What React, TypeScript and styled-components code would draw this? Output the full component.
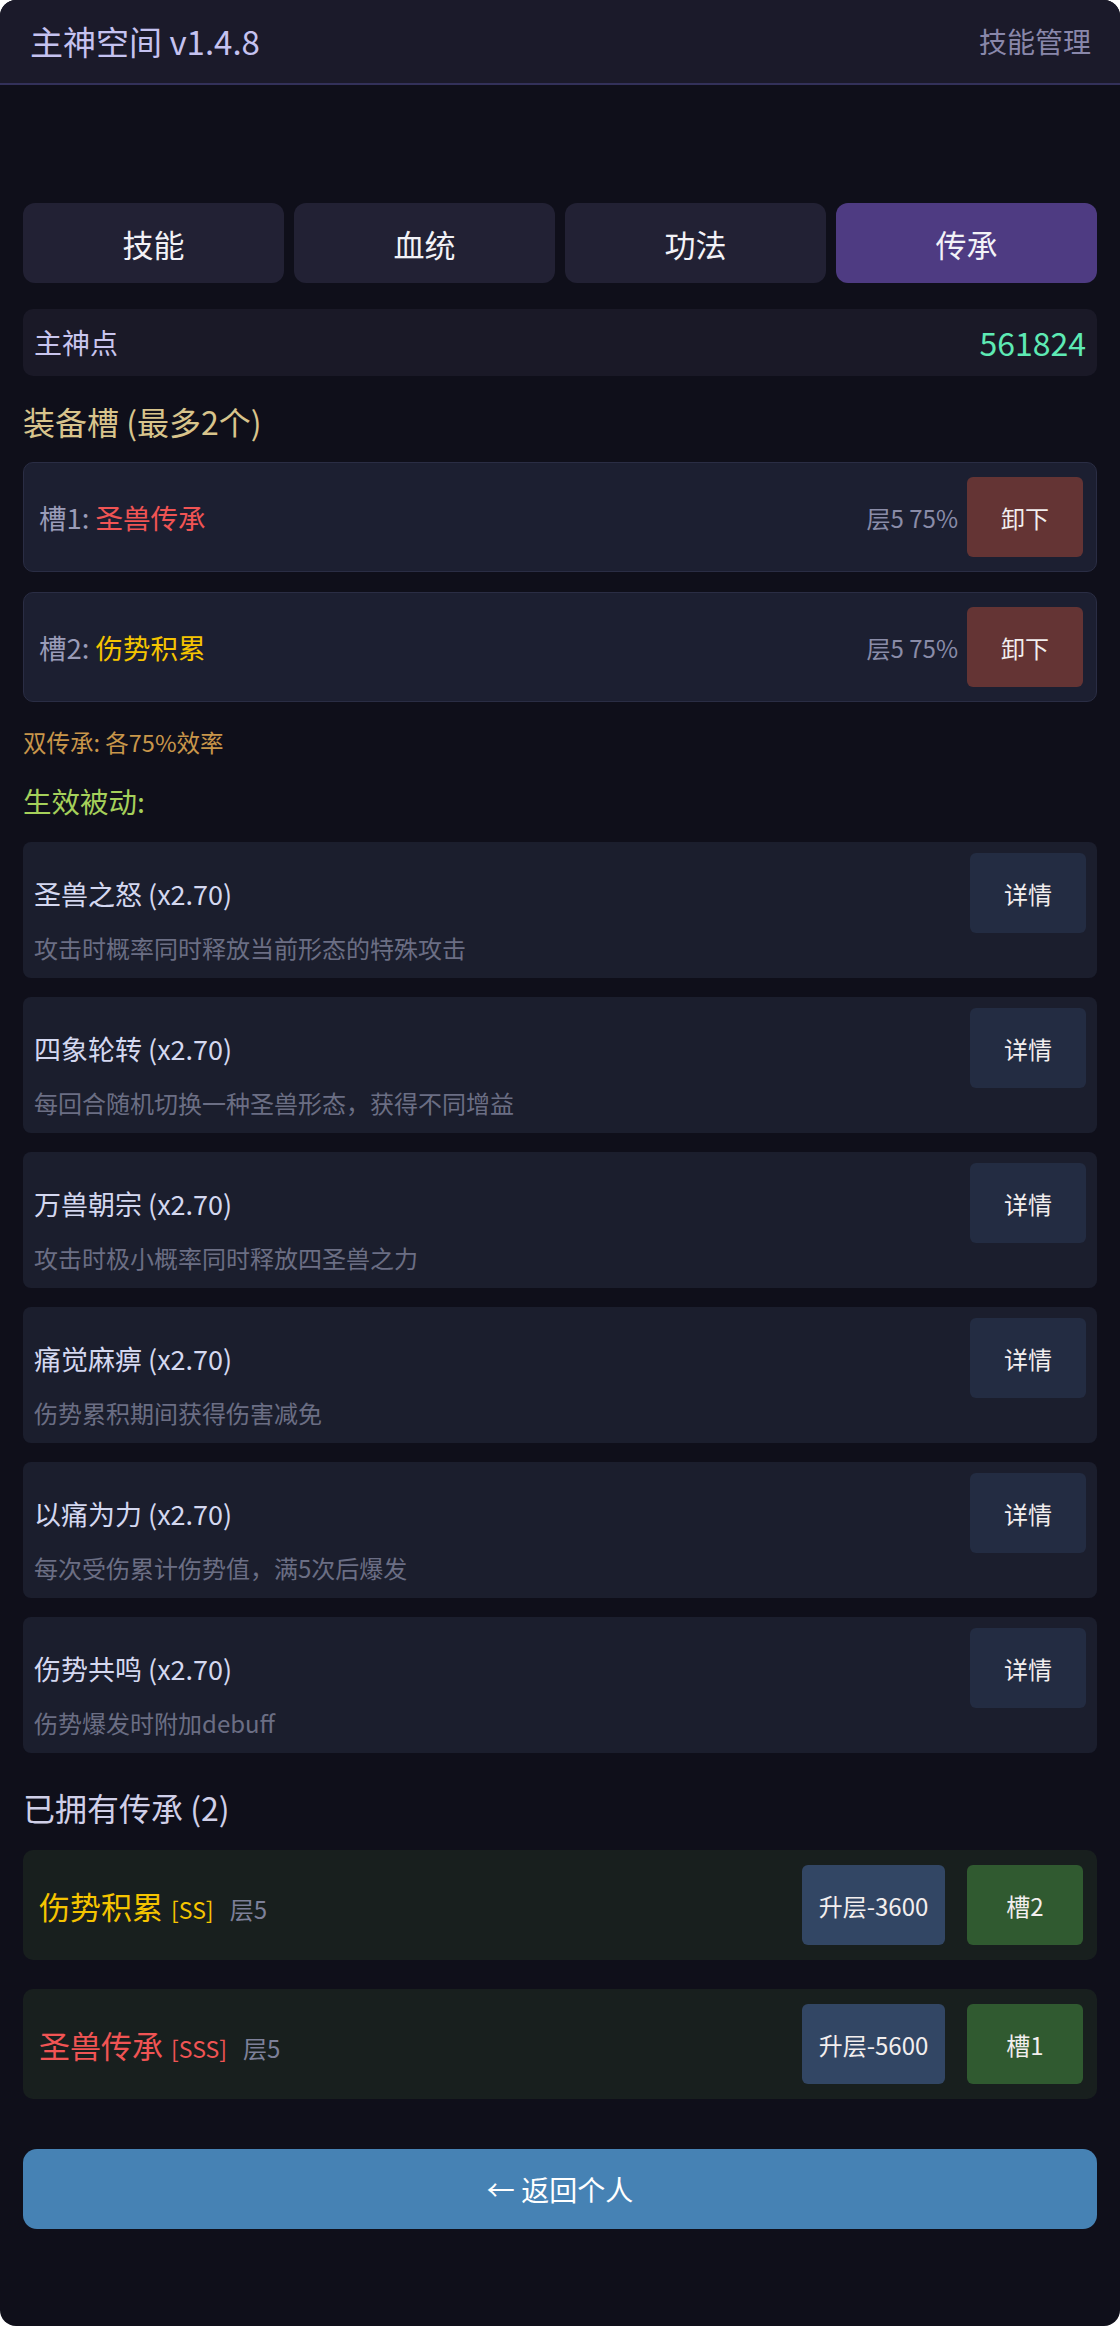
import React from "react";
import styled, { createGlobalStyle } from "styled-components";

const GlobalStyle = createGlobalStyle`
  html, body {
    margin: 0;
    padding: 0;
    background: #ffffff;
  }
  body {
    font-family: "Noto Sans CJK SC", "Noto Sans", sans-serif;
  }
  * {
    box-sizing: border-box;
  }
`;

const Screen = styled.div`
  width: 1120px;
  min-height: 2326px;
  background: #0f0f1a;
  border-radius: 16px;
  overflow: hidden;
`;

const Header = styled.header`
  height: 85px;
  display: flex;
  align-items: center;
  justify-content: space-between;
  padding: 0 29px 2px 30px;
  background: #1b1a2a;
  border-bottom: 2px solid #33315a;
`;

const Title = styled.h1`
  margin: 0;
  font-size: 33px;
  font-weight: 400;
  color: #c5c2f0;
`;

const HeaderLink = styled.span`
  font-size: 28px;
  color: #8987aa;
`;

const Main = styled.main`
  padding: 118px 23px 97px;
  display: flex;
  flex-direction: column;
`;

const Tabs = styled.nav`
  display: grid;
  grid-template-columns: repeat(4, 1fr);
  gap: 10px;
`;

const Tab = styled.button<{ $active?: boolean }>`
  height: 80px;
  border: none;
  border-radius: 12px;
  background: ${(p) => (p.$active ? "#4e3b82" : "#222134")};
  color: #f2f2f7;
  font-family: inherit;
  font-size: 31px;
`;

const PointsBar = styled.div`
  margin-top: 26px;
  height: 67px;
  display: flex;
  align-items: center;
  justify-content: space-between;
  padding: 0 11px 2px 11px;
  background: #1a1927;
  border-radius: 10px;
`;

const PointsLabel = styled.span`
  font-size: 28px;
  color: #c9c5ee;
`;

const PointsValue = styled.span`
  font-size: 32px;
  color: #5eeab4;
`;

const SectionTitle = styled.h2<{ $color: string; $size?: number; $top: number }>`
  margin: ${(p) => p.$top}px 0 0;
  font-size: ${(p) => p.$size ?? 32}px;
  line-height: 40px;
  font-weight: 400;
  color: ${(p) => p.$color};
`;

const SlotList = styled.div`
  margin-top: 21px;
  display: flex;
  flex-direction: column;
  gap: 20px;
`;

const SlotCard = styled.div`
  height: 110px;
  display: flex;
  align-items: center;
  padding: 0 13px 0 15px;
  background: #1c1f31;
  border: 1px solid #2a2d44;
  border-radius: 10px;
`;

const SlotLabel = styled.span`
  flex: 1;
  font-size: 27.5px;
  color: #9a9cb8;
`;

const Colored = styled.span<{ $color: string }>`
  color: ${(p) => p.$color};
`;

const SlotMeta = styled.span`
  font-size: 24px;
  color: #8a8ca8;
  margin-right: 9px;
`;

const ActionButton = styled.button<{ $bg: string; $width: number }>`
  width: ${(p) => p.$width}px;
  height: 80px;
  border: none;
  border-radius: 6px;
  background: ${(p) => p.$bg};
  color: #f2eeee;
  font-family: inherit;
  font-size: 24px;
  padding: 0;
  flex-shrink: 0;
`;

const Note = styled.p`
  margin: 25px 0 0;
  font-size: 23.5px;
  line-height: 30px;
  color: #c8964a;
`;

const PassiveList = styled.div`
  margin-top: 21px;
  display: flex;
  flex-direction: column;
  gap: 19px;
`;

const PassiveCard = styled.div`
  height: 136px;
  padding: 11px 11px 13px 11px;
  background: #1b1e2d;
  border-radius: 8px;
`;

const PassiveRow = styled.div`
  display: flex;
  align-items: center;
  justify-content: space-between;
`;

const PassiveName = styled.span`
  font-size: 27px;
  color: #d4d8f0;
`;

const PassiveDesc = styled.div`
  font-size: 24px;
  line-height: 30px;
  color: #6b6e84;
`;

const OwnedList = styled.div`
  margin-top: 23px;
  display: flex;
  flex-direction: column;
  gap: 29px;
`;

const OwnedCard = styled.div`
  height: 110px;
  display: flex;
  align-items: center;
  gap: 22px;
  padding: 0 14px 0 16px;
  background: #181f1e;
  border-radius: 10px;
`;

const OwnedInfo = styled.div`
  flex: 1;
  display: flex;
  align-items: baseline;
`;

const OwnedName = styled.span<{ $color: string }>`
  font-size: 31px;
  color: ${(p) => p.$color};
`;

const Grade = styled.span<{ $color: string }>`
  font-size: 23px;
  color: ${(p) => p.$color};
  margin-left: 8px;
`;

const Level = styled.span`
  font-size: 24px;
  color: #7d8099;
  margin-left: 16px;
`;

const BackButton = styled.button`
  margin-top: 50px;
  height: 80px;
  border: none;
  border-radius: 14px;
  background: #4682b4;
  color: #ffffff;
  font-family: inherit;
  font-size: 28px;
`;

const passives = [
  { name: "圣兽之怒", desc: "攻击时概率同时释放当前形态的特殊攻击" },
  { name: "四象轮转", desc: "每回合随机切换一种圣兽形态，获得不同增益" },
  { name: "万兽朝宗", desc: "攻击时极小概率同时释放四圣兽之力" },
  { name: "痛觉麻痹", desc: "伤势累积期间获得伤害减免" },
  { name: "以痛为力", desc: "每次受伤累计伤势值，满5次后爆发" },
  { name: "伤势共鸣", desc: "伤势爆发时附加debuff" },
];

const RED = "#f05454";
const YELLOW = "#f5c400";

const slots = [
  { slot: 1, name: "圣兽传承", color: RED },
  { slot: 2, name: "伤势积累", color: YELLOW },
];

const owned = [
  { name: "伤势积累", grade: "SS", color: YELLOW, cost: 3600, slot: 2 },
  { name: "圣兽传承", grade: "SSS", color: RED, cost: 5600, slot: 1 },
];

export default function App() {
  return (
    <>
      <GlobalStyle />
      <Screen>
        <Header>
          <Title>主神空间 v1.4.8</Title>
          <HeaderLink>技能管理</HeaderLink>
        </Header>
        <Main>
          <Tabs>
            <Tab>技能</Tab>
            <Tab>血统</Tab>
            <Tab>功法</Tab>
            <Tab $active>传承</Tab>
          </Tabs>

          <PointsBar>
            <PointsLabel>主神点</PointsLabel>
            <PointsValue>561824</PointsValue>
          </PointsBar>

          <SectionTitle $color="#d8c48c" $top={25}>
            装备槽 (最多2个)
          </SectionTitle>
          <SlotList>
            {slots.map((s) => (
              <SlotCard key={s.slot}>
                <SlotLabel>
                  槽{s.slot}: <Colored $color={s.color}>{s.name}</Colored>
                </SlotLabel>
                <SlotMeta>层5 75%</SlotMeta>
                <ActionButton $bg="#643434" $width={116}>
                  卸下
                </ActionButton>
              </SlotCard>
            ))}
          </SlotList>

          <Note>双传承: 各75%效率</Note>

          <SectionTitle $color="#a5d05a" $size={28.5} $top={24}>
            生效被动:
          </SectionTitle>
          <PassiveList>
            {passives.map((p) => (
              <PassiveCard key={p.name}>
                <PassiveRow>
                  <PassiveName>{p.name} (x2.70)</PassiveName>
                  <ActionButton $bg="#232c42" $width={116}>
                    详情
                  </ActionButton>
                </PassiveRow>
                <PassiveDesc>{p.desc}</PassiveDesc>
              </PassiveCard>
            ))}
          </PassiveList>

          <SectionTitle $color="#d0cfe8" $top={34}>
            已拥有传承 (2)
          </SectionTitle>
          <OwnedList>
            {owned.map((o) => (
              <OwnedCard key={o.name}>
                <OwnedInfo>
                  <OwnedName $color={o.color}>{o.name}</OwnedName>
                  <Grade $color={o.color}>[{o.grade}]</Grade>
                  <Level>层5</Level>
                </OwnedInfo>
                <ActionButton $bg="#324664" $width={143}>
                  升层-{o.cost}
                </ActionButton>
                <ActionButton $bg="#305a30" $width={116}>
                  槽{o.slot}
                </ActionButton>
              </OwnedCard>
            ))}
          </OwnedList>

          <BackButton>← 返回个人</BackButton>
        </Main>
      </Screen>
    </>
  );
}
